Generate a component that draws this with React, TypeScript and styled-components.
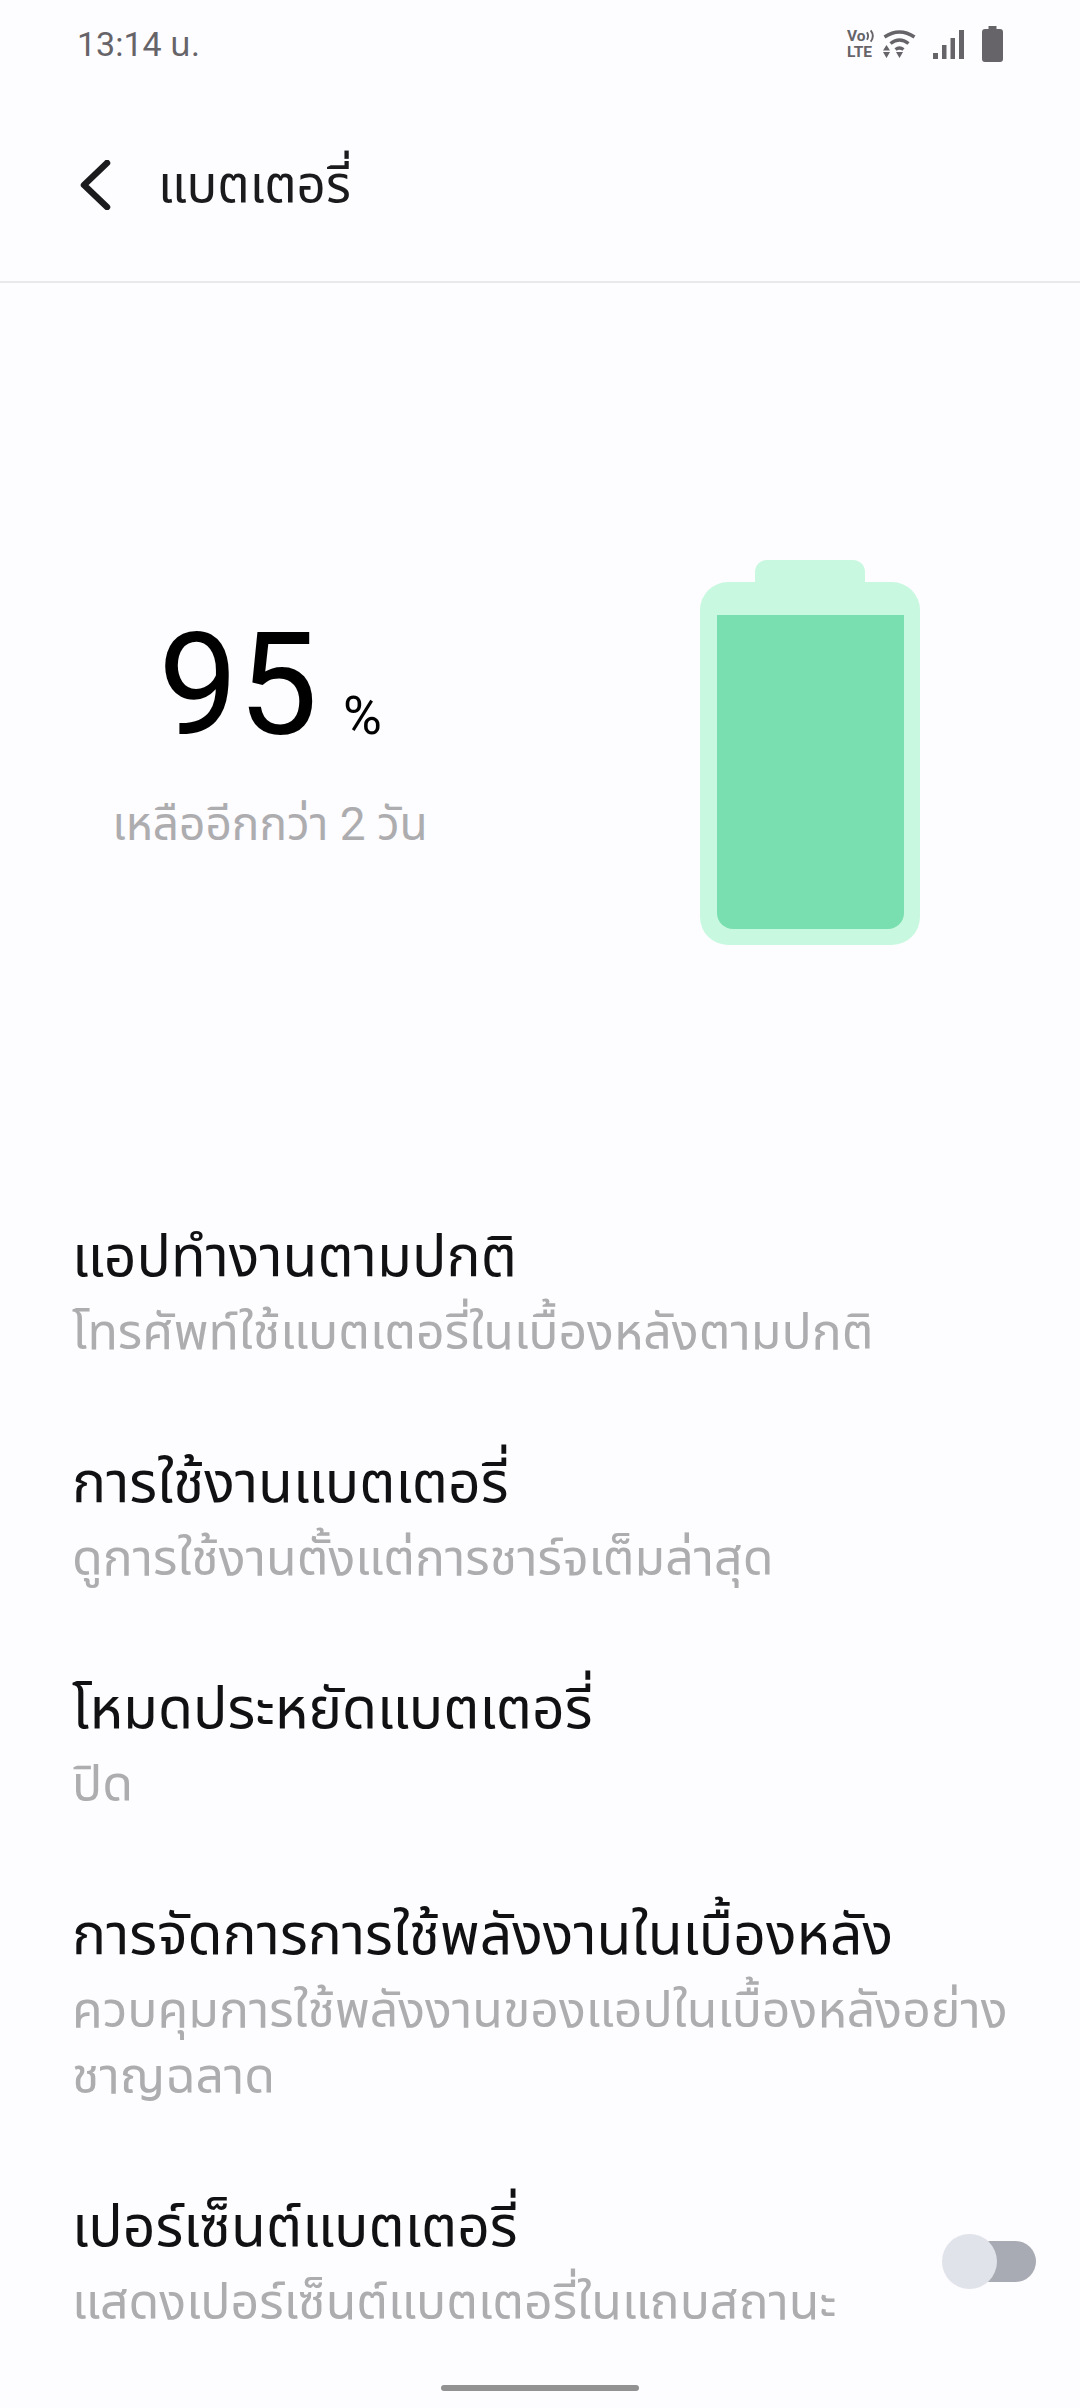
import styled, { createGlobalStyle } from "styled-components";

const SETTINGS = [
  { title: "แอปทำงานตามปกติ", sub: "โทรศัพท์ใช้แบตเตอรี่ในเบื้องหลังตามปกติ" },
  { title: "การใช้งานแบตเตอรี่", sub: "ดูการใช้งานตั้งแต่การชาร์จเต็มล่าสุด" },
  { title: "โหมดประหยัดแบตเตอรี่", sub: "ปิด" },
  {
    title: "การจัดการการใช้พลังงานในเบื้องหลัง",
    sub: "ควบคุมการใช้พลังงานของแอปในเบื้องหลังอย่าง ชาญฉลาด"
  }
];

const GlobalStyle = createGlobalStyle`
  html, body {
    margin: 0;
    padding: 0;
    background: #fdfcff;
  }
  body {
    font-family: Roboto, "Noto Sans", "Noto Sans Thai", sans-serif;
  }
`;

const StatusIcons = () => (
  <StatusRight>
    <VoLte>
      <VoLine>
        Vo
        <svg width="9" height="14" viewBox="0 0 9 14" fill="none" stroke="#666468" strokeWidth="2">
          <path d="M1 3q2.500 4 0 8M5 1q4.500 6 0 12" />
        </svg>
      </VoLine>
      <span>LTE</span>
    </VoLte>
    <WifiIcon width="33" height="28" viewBox="0 0 33 28" fill="none" stroke="#666468">
      <path d="M1.500 7Q16.500 -3 31.500 7" strokeWidth="3.400" />
      <path d="M7.500 13.500Q16.500 6.500 25.500 13.500" strokeWidth="3.400" />
      <path d="M12.500 19.500Q16.500 16.500 20.500 19.500" strokeWidth="3.400" />
      <path d="M3.500 15l3.500 5.500H0zM0 22h7l-3.500 6zM13 22h7l-3.500 6z" fill="#666468" stroke="none" />
    </WifiIcon>
    <SignalIcon width="31" height="29" viewBox="0 0 31 29" fill="#666468">
      <rect x="0" y="23" width="5" height="6" />
      <rect x="9" y="15" width="4.500" height="14" />
      <rect x="17.500" y="8" width="4.500" height="21" />
      <rect x="26" y="0" width="5" height="29" />
    </SignalIcon>
    <BatteryIcon width="21" height="36" viewBox="0 0 21 36" fill="#666468">
      <path d="M6.500 0h8v3h3.500a3 3 0 0 1 3 3v27a3 3 0 0 1-3 3H3a3 3 0 0 1-3-3V6a3 3 0 0 1 3-3h3.500z" />
    </BatteryIcon>
  </StatusRight>
);

const App = () => {
  return (
    <Page>
      <GlobalStyle />
      <StatusBar>
        <Clock>13:14 น.</Clock>
        <StatusIcons />
      </StatusBar>
      <Header>
        <svg width="34" height="50" viewBox="0 0 34 50" fill="none">
          <path
            d="M29 3L6 25l23 22"
            stroke="#1b1b1d"
            strokeWidth="6.500"
            strokeLinecap="round"
            strokeLinejoin="round"
          />
        </svg>
        <Title>แบตเตอรี่</Title>
      </Header>

      <Hero>
        <Summary>
          <Percent>
            <Digits>95</Digits>
            <PercentSign>%</PercentSign>
          </Percent>
          <Remaining>เหลืออีกกว่า 2 วัน</Remaining>
        </Summary>
        <Battery>
          <BatteryCap />
          <BatteryBody>
            <BatteryFill />
          </BatteryBody>
        </Battery>
      </Hero>

      <List>
        {SETTINGS.map((item) => (
          <Row key={item.title}>
            <RowTitle>{item.title}</RowTitle>
            <RowSub>{item.sub}</RowSub>
          </Row>
        ))}
        <SwitchRow>
          <div>
            <RowTitle>เปอร์เซ็นต์แบตเตอรี่</RowTitle>
            <RowSub>แสดงเปอร์เซ็นต์แบตเตอรี่ในแถบสถานะ</RowSub>
          </div>
          <Switch>
            <SwitchKnob />
          </Switch>
        </SwitchRow>
      </List>
      <HomeBar />
    </Page>
  );
};

const Page = styled.div`
  position: relative;
  width: 1080px;
  height: 2408px;
  overflow: hidden;
  background: #fdfcff;
`;

const StatusBar = styled.div`
  display: flex;
  justify-content: space-between;
  align-items: center;
  height: 88px;
  padding: 0 77px 0 77px;
`;

const Clock = styled.div`
  margin-top: 3px;
  font-size: 34px;
  color: #666468;
`;

const StatusRight = styled.div`
  display: flex;
  align-items: center;
`;

const VoLte = styled.div`
  display: flex;
  flex-direction: column;
  gap: 3px;
  width: 27px;
  font-size: 15.5px;
  font-weight: 700;
  line-height: 13px;
  color: #666468;
`;

const VoLine = styled.div`
  display: flex;
  align-items: center;
`;

const WifiIcon = styled.svg`
  margin-left: 9px;
`;

const SignalIcon = styled.svg`
  margin-left: 17px;
`;

const BatteryIcon = styled.svg`
  margin-left: 18px;
`;

const Header = styled.div`
  display: flex;
  align-items: center;
  gap: 46px;
  height: 193px;
  padding-left: 78px;
  border-bottom: 2px solid #e9e8ea;
`;

const Title = styled.div`
  margin-top: 4px;
  font-size: 51px;
  color: #1b1b1d;
`;

const Hero = styled.div`
  display: flex;
  align-items: flex-start;
  height: 931px;
  padding-top: 277px;
  box-sizing: border-box;
`;

const Summary = styled.div`
  display: flex;
  flex-direction: column;
  align-items: center;
  width: 540px;
  padding-top: 51px;
`;

const Percent = styled.div`
  display: flex;
  align-items: baseline;
  gap: 25px;
  color: #000;
`;

const Digits = styled.span`
  font-size: 142px;
  line-height: 150px;
`;

const PercentSign = styled.span`
  font-size: 53px;
`;

const Remaining = styled.div`
  margin-top: 30px;
  font-size: 46px;
  color: #adadb0;
`;

const Battery = styled.div`
  display: flex;
  flex-direction: column;
  align-items: center;
  width: 220px;
  margin-left: 160px;
`;

const BatteryCap = styled.div`
  width: 110px;
  height: 22px;
  border-radius: 12px 12px 0 0;
  background: #c8f9e0;
`;

const BatteryBody = styled.div`
  display: flex;
  flex-direction: column;
  justify-content: flex-end;
  width: 100%;
  height: 363px;
  padding: 0 16px 16px 17px;
  box-sizing: border-box;
  border-radius: 28px;
  background: #c8f9e0;
`;

const BatteryFill = styled.div`
  height: 314px;
  border-radius: 0 0 16px 16px;
  background: #7adfb0;
`;

const List = styled.div`
  display: flex;
  flex-direction: column;
  padding: 0 72px;
`;

const Row = styled.div`
  padding-bottom: 75px;
`;

const SwitchRow = styled.div`
  display: flex;
  justify-content: space-between;
  align-items: center;
  margin-right: -28px;
`;

const RowTitle = styled.div`
  font-size: 57px;
  line-height: 85px;
  color: #111113;
`;

const RowSub = styled.div`
  font-size: 50px;
  line-height: 66px;
  color: #adadb0;
`;

const Switch = styled.div`
  position: relative;
  flex-shrink: 0;
  width: 66px;
  height: 41px;
  margin-top: 4px;
  border-radius: 21px;
  background: #a8abb3;
`;

const SwitchKnob = styled.div`
  position: absolute;
  top: -7px;
  left: -28px;
  width: 55px;
  height: 55px;
  border-radius: 50%;
  background: #e1e3ea;
`;

const HomeBar = styled.div`
  position: absolute;
  left: 441px;
  bottom: 17px;
  width: 198px;
  height: 6px;
  border-radius: 3px;
  background: #929292;
`;

export default App;
